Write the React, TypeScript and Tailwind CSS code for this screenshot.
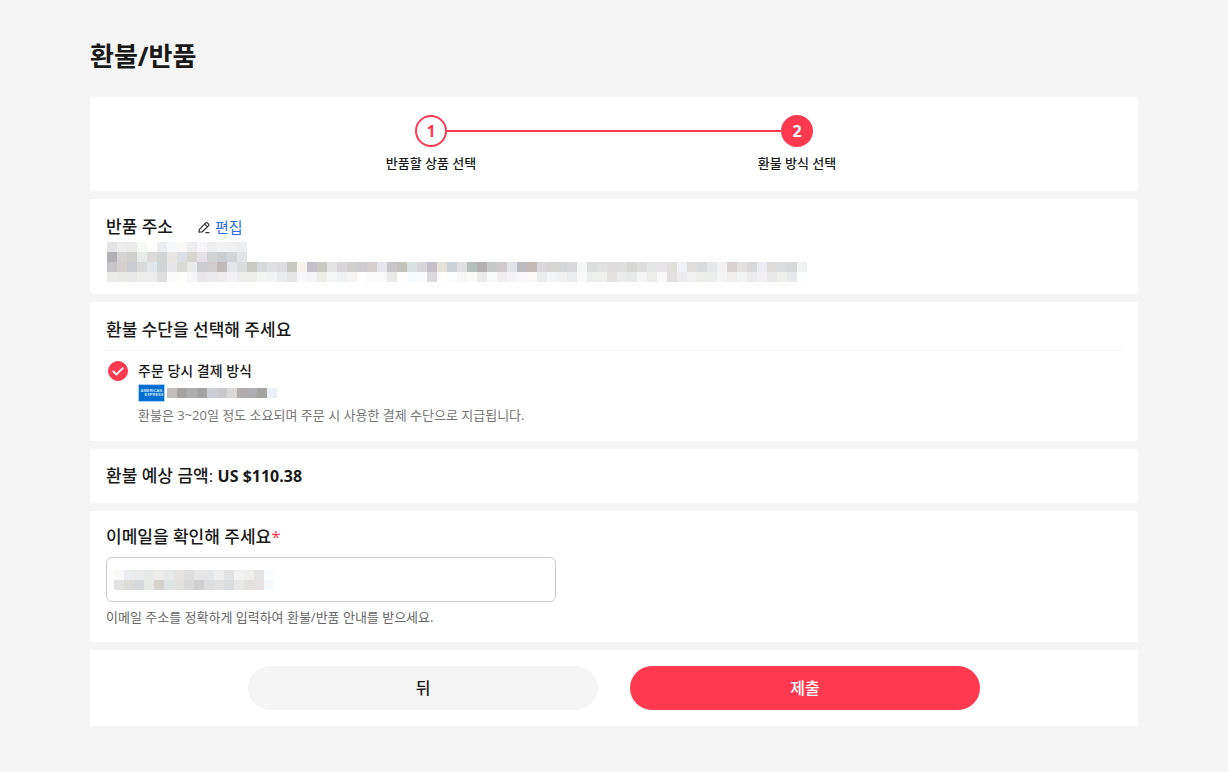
import { useState } from "react";
import type { FormEvent, ReactNode } from "react";
import clsx from "clsx";

// Personal details are masked as a mosaic: one string per row, one colour per
// 10px cell.
const ADDRESS_MASK = [
  "e4e4e4 ededed ebebeb f5f8f5 fdfffc ebecef f5f8f9 f9f8f6 ededf0 f7f6f8 efeff2 f1f2f1 f0f0f0 ecedef",
  "b1b0b5 d4d4d4 cfcfcd e6ebea dddcda d2d4d3 e8e4e0 dce0e5 d7d6d1 e7e0e9 d2d4d4 cccdd2 d4d5d8 e2e3e6",
  "c6c4c9 d6d1cc cccdd3 d9d9d9 e1e6ea d1d4d4 e6e6e8 dadbd6 eaeaea cccdd0 d1cdce c0bbba e4e5ea dadbdb c9cac4 d5d9de e0e0e0 dcdce0 c7c8c2 f8f2ed c3c0cb c7c8c1 e3e3e4 d7d5d9 cfd0c9 cecbd1 d4cfce e5e6ec c9c6c8 c4c2bb d9e1e3 d8d5d8 c5bfcb e6e1d9 cdd2da e0e0e0 b5c0bc b5b0b2 c5cac9 d0c9cc e0e4e8 bdbbc2 c4bab8 d8d8dd d6d5d2 d4d6d8 d9d9db f5f7f6 dcdedd e1e1e2 dfdcde dedfde d6d6d4 dcdddc e4e6e6 e6e4e6 e0dfda eff3f8 e2dedd dadbde e6e7ea f1f1f1 d8d3d2 e3e2e0 d9d9da ebecf1 dfdada d8dcdd d8d8d9 f1f3f2",
  "ebebea e9e9e6 e8e8e8 ededeb eeeeee dddedd fbfbfb fdfdfa f7f6f8 e8e6eb ebeaec efecee f3f3f7 eeeeec eeeeeb f4f6f4 f1f3f5 eaebec e6e6e6 f7f7fa f4f3f5 ecede7 f5f6f6 eff2f4 f6f5f3 ffffff fafafa fafafa eaeaea fffefb f6fbff fafbfc dbd9dd fffefc fbfcff f7f7f7 fbfcf9 ebebeb f7faf8 f0eeef f4f4f8 faf7fb fbf9f8 ebeded f4f5f9 f2f3f0 ebecf0 f8f9f8 edefee efefee e3e2e0 ebebeb e8eae9 f5f5f5 ededec f8f8f8 e2dfe1 ebebee f0f0f0 ecece9 ebedec f4f4f4 f1efee f3f5f4 ebebec f2f0f4 e8e8e9 eeeeea e8e9ec fcfeff",
];

const CARD_MASK = [
  "c2bebc a5a3a1 aeadad a3a3a1 cccfd4 c9c9cb d8d8d6 b2adad adacb0 a3a3a1 eaf0f5",
];

const EMAIL_MASK = [
  "f9f9f8 ecedf0 eaebea e8eae9 eeece8 e5e9ea e4e3e0 dddddd e6e6e6 e4e5e7 eeeeee e2e2e4 f2f2f2 eeeeec e4e3e4 fcfdff",
  "e2e2e2 dddcd8 d5d9dc e8eae7 d6d1cd dee4e6 e1e1de d8d8d8 cfcfcf dddde0 e2e2e2 dbdce1 e8e8e7 e3e2e1 e7e1e4 f3f9ff",
];

function Mosaic({ rows }: { rows: string[] }) {
  const cells = rows.map((row) => row.split(" "));
  const cols = Math.max(...cells.map((row) => row.length));
  return (
    <svg
      width={cols * 10}
      height={rows.length * 10}
      shapeRendering="crispEdges"
      aria-hidden="true"
      className="block shrink-0"
    >
      {cells.map((row, y) =>
        row.map((color, x) => (
          <rect
            key={`${x}-${y}`}
            x={x * 10}
            y={y * 10}
            width={10}
            height={10}
            fill={`#${color}`}
          />
        )),
      )}
    </svg>
  );
}

function Card({
  className,
  children,
}: {
  className?: string;
  children: ReactNode;
}) {
  return (
    <section className={clsx("rounded-xs bg-white px-4", className)}>
      {children}
    </section>
  );
}

function Step({
  number,
  label,
  current,
}: {
  number: number;
  label: string;
  current?: boolean;
}) {
  return (
    <li className="flex-1" aria-current={current ? "step" : undefined}>
      <div className="flex items-center">
        <span className={clsx("h-0.5 flex-1", current && "bg-[#ff394f]")} />
        <span
          className={clsx(
            "flex size-8 items-center justify-center rounded-full border-2 border-[#ff394f] text-base font-bold",
            current ? "bg-[#ff394f] text-white" : "text-[#ff394f]",
          )}
        >
          {number}
        </span>
        <span className={clsx("h-0.5 flex-1", !current && "bg-[#ff394f]")} />
      </div>
      <p className="mt-2 text-center text-[13px] leading-4 font-medium">
        {label}
      </p>
    </li>
  );
}

function PencilIcon() {
  return (
    <svg
      width="14"
      height="14"
      viewBox="0 0 14 14"
      fill="none"
      stroke="#333"
      strokeWidth="1.2"
      strokeLinejoin="round"
      strokeLinecap="round"
      aria-hidden="true"
    >
      <path d="M2 12.2 2.4 9.3 8.6 3.1a1.4 1.4 0 0 1 2 0l.8.8a1.4 1.4 0 0 1 0 2L5 12Z" />
      <path d="M7.8 4.1 10.3 6.6M8.8 12.6h3.2" />
    </svg>
  );
}

function AmexLogo() {
  return (
    <svg
      width="27"
      height="18"
      viewBox="0 0 27 18"
      role="img"
      aria-label="American Express"
      className="shrink-0"
    >
      <rect
        x="0.5"
        y="0.5"
        width="26"
        height="17"
        rx="1"
        fill="#016fd0"
        stroke="#a9cdec"
      />
      <g
        fill="#cfe4f7"
        fontFamily="Liberation Sans, sans-serif"
        fontWeight="bold"
        fontSize="4"
      >
        <text x="2.5" y="8.4">
          AMERICAN
        </text>
        <text x="6.5" y="12.4">
          EXPRESS
        </text>
      </g>
    </svg>
  );
}

export default function App() {
  const [email, setEmail] = useState("");

  function handleSubmit(e: FormEvent) {
    e.preventDefault();
  }

  return (
    <div className="min-h-screen bg-[#f5f5f5] pt-10 pb-11 font-['Open_Sans','Noto_Sans_CJK_KR',sans-serif] text-[#191919]">
      <form
        onSubmit={handleSubmit}
        className="mx-auto flex w-full max-w-[1048px] flex-col gap-2"
      >
        <h1 className="mb-[17px] text-[26px] leading-8 font-bold">환불/반품</h1>

        <Card className="pt-[18px] pb-5">
          <ol className="mx-auto flex max-w-[732px]">
            <Step number={1} label="반품할 상품 선택" />
            <Step number={2} label="환불 방식 선택" current />
          </ol>
        </Card>

        <Card className="overflow-hidden pt-4 pb-3">
          <div className="flex h-6 items-center gap-6">
            <h2 className="text-[17px] leading-6 font-medium">반품 주소</h2>
            <a
              href="#edit"
              className="flex items-center gap-1 text-[15px] leading-6 text-[#2e6fe8]"
            >
              <PencilIcon />
              편집
            </a>
          </div>
          <div className="mt-[3px] pl-px">
            <Mosaic rows={ADDRESS_MASK} />
          </div>
        </Card>

        <Card className="pt-4 pb-4">
          <h2 className="border-b border-[#f5f5f5] pb-2 text-[17px] leading-6 font-medium">
            환불 수단을 선택해 주세요
          </h2>
          <div className="mt-2 flex gap-2.5 pl-0.5">
            <span className="relative mt-0.5 size-5 shrink-0">
              <input
                type="radio"
                id="original-payment"
                name="refund-method"
                defaultChecked
                className="block size-5 appearance-none rounded-full border border-[#ccc] checked:border-[#ff394f] checked:bg-[#ff394f]"
              />
              <svg
                viewBox="0 0 20 20"
                fill="none"
                stroke="#fff"
                strokeWidth="1.8"
                strokeLinecap="round"
                strokeLinejoin="round"
                aria-hidden="true"
                className="pointer-events-none absolute inset-0"
              >
                <path d="m5.2 10.4 3.2 3.1 6.4-6.4" />
              </svg>
            </span>
            <div>
              <label
                htmlFor="original-payment"
                className="block text-sm leading-6 font-medium"
              >
                주문 당시 결제 방식
              </label>
              <div className="mt-px flex items-center gap-0.5">
                <AmexLogo />
                <Mosaic rows={CARD_MASK} />
              </div>
              <p className="mt-[3px] text-[13px] leading-5 text-[#757575]">
                환불은 3~20일 정도 소요되며 주문 시 사용한 결제 수단으로
                지급됩니다.
              </p>
            </div>
          </div>
        </Card>

        <Card className="py-[15px]">
          <p className="text-[17px] leading-6 font-medium">
            환불 예상 금액:{" "}
            <strong className="text-base font-bold">US $110.38</strong>
          </p>
        </Card>

        <Card className="pt-3.5 pb-[15px]">
          <label
            htmlFor="email"
            className="block text-[17px] leading-6 font-medium"
          >
            이메일을 확인해 주세요
            <span className="font-normal text-[#ff394f]">*</span>
          </label>
          <div className="relative mt-2 max-w-[450px]">
            <input
              id="email"
              type="email"
              value={email}
              onChange={(e) => setEmail(e.target.value)}
              className="block h-[45px] w-full rounded-md border border-[#ccc] bg-white px-2 text-sm outline-none"
            />
            {email === "" ? (
              <div className="pointer-events-none absolute inset-y-0 left-2 flex items-center">
                <Mosaic rows={EMAIL_MASK} />
              </div>
            ) : null}
          </div>
          <p className="mt-[5px] text-[13px] leading-5 text-[#666]">
            이메일 주소를 정확하게 입력하여 환불/반품 안내를 받으세요.
          </p>
        </Card>

        <div className="flex justify-center gap-8 bg-white p-4">
          <button
            type="button"
            className="h-11 w-full max-w-[350px] rounded-full bg-[#f5f5f5] text-base font-medium"
          >
            뒤
          </button>
          <button
            type="submit"
            className="h-11 w-full max-w-[350px] rounded-full bg-[#ff394f] text-base font-medium text-white"
          >
            제출
          </button>
        </div>
      </form>
    </div>
  );
}
